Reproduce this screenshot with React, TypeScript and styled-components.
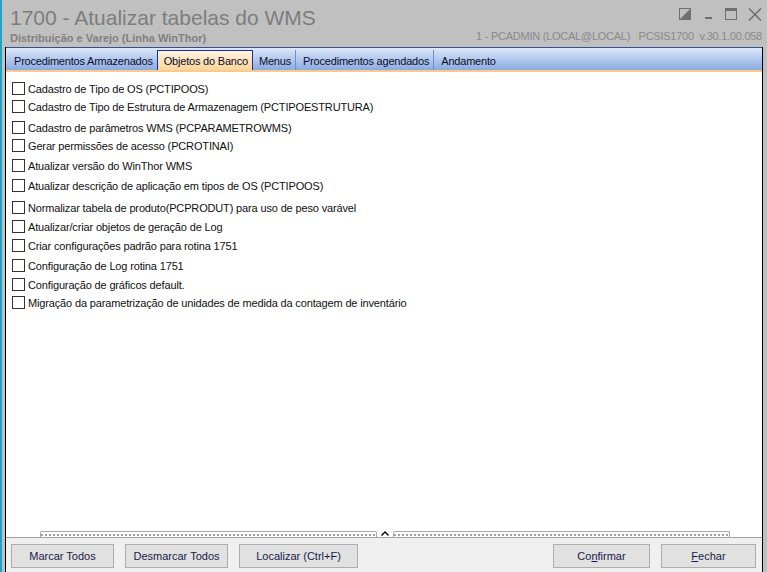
import React from "react";
import styled, { createGlobalStyle } from "styled-components";

const GlobalStyle = createGlobalStyle`
  html, body {
    margin: 0;
    padding: 0;
    background: #c0c0c0;
  }
  body {
    font-family: "Liberation Sans", Arial, sans-serif;
  }
`;

const Window = styled.div`
  width: 767px;
  height: 572px;
  box-sizing: border-box;
  border-left: 2px solid #27a1c0;
  background: #c0c0c0;
  display: flex;
  flex-direction: column;
  overflow: hidden;
`;

const TitleBar = styled.div`
  height: 47px;
  flex: none;
  display: flex;
  justify-content: space-between;
  padding: 0 5px 0 8px;
`;

const TitleBlock = styled.div`
  display: flex;
  flex-direction: column;
`;

const Title = styled.div`
  font-size: 21px;
  color: #7d7d7d;
  line-height: 24px;
  margin-top: 6px;
`;

const Subtitle = styled.div`
  font-size: 11px;
  font-weight: bold;
  color: #808080;
  margin-top: 2px;
`;

const RightBlock = styled.div`
  display: flex;
  flex-direction: column;
  align-items: flex-end;
`;

const Controls = styled.div`
  display: flex;
  gap: 10px;
  margin-top: 7px;
  height: 14px;
  align-items: center;
`;

const Info = styled.div`
  font-size: 11px;
  letter-spacing: -0.25px;
  color: #8a8a8a;
  margin-top: 9px;
  white-space: pre;
`;

const Frame = styled.div`
  flex: 1;
  display: flex;
  flex-direction: column;
  margin: 0 4px 0 3px;
  border-left: 1px solid #000;
  border-right: 1px solid #000;
  min-height: 0;
`;

const TabBar = styled.div`
  height: 22px;
  flex: none;
  display: flex;
  align-items: flex-end;
  padding-left: 2px;
  background: linear-gradient(#dde8fa, #8aabe1);
  border-top: 1px solid #3a4f8a;
  border-bottom: 2px solid #fbc98c;
`;

const Tab = styled.div<{ $active?: boolean; $sep?: boolean }>`
  height: 20px;
  box-sizing: border-box;
  padding: 0 4px 0 6px;
  font-size: 11px;
  letter-spacing: -0.2px;
  line-height: 22px;
  color: #0b0b2a;
  white-space: nowrap;
  ${(p) =>
    p.$active
      ? `
    background: linear-gradient(#fff4de, #fbd49a);
    border: 1px solid #1b2f8c;
    border-bottom: none;
    line-height: 20px;
  `
      : ""}
  ${(p) =>
    p.$sep
      ? `
    border-right: 1px solid #6d8fcf;
    margin-right: 1px;
  `
      : ""}
`;

const Body = styled.div`
  flex: 1;
  background: #fff;
  display: flex;
  flex-direction: column;
  padding-left: 6px;
`;

const Row = styled.label<{ $top: number }>`
  display: flex;
  align-items: center;
  height: 13px;
  margin-top: ${(p) => p.$top}px;
  font-size: 11px;
  letter-spacing: -0.15px;
  color: #101010;
  white-space: nowrap;
`;

const Box = styled.span`
  width: 13px;
  height: 13px;
  box-sizing: border-box;
  border: 1px solid #333;
  background: #fff;
  margin-right: 3px;
  flex: none;
`;

const Splitter = styled.div`
  height: 9px;
  flex: none;
  background: #fff;
  display: flex;
  align-items: flex-end;
  padding: 0 32px 0 34px;
  border-bottom: 1px solid #a0a0a0;
`;

const Grip = styled.div`
  flex: 1;
  height: 6px;
  box-sizing: border-box;
  border: 1px solid #a8a8a8;
  border-bottom: none;
  border-radius: 2px 2px 0 0;
  background: repeating-linear-gradient(
      90deg,
      #a0a0a0 0 2px,
      transparent 2px 4px
    )
    center 2px / 100% 2px no-repeat;
`;

const Caret = styled.div`
  width: 16px;
  display: flex;
  justify-content: center;
  align-items: center;
  height: 7px;
`;

const ButtonBar = styled.div`
  height: 34px;
  flex: none;
  box-sizing: border-box;
  background: #f0f0f0;
  display: flex;
  align-items: flex-start;
  padding: 6px 6px 0 5px;
  gap: 11px;
`;

const Button = styled.button<{ $w: number }>`
  width: ${(p) => p.$w}px;
  height: 24px;
  background: #e1e1e1;
  border: 1px solid #adadad;
  font-family: "Liberation Sans", Arial, sans-serif;
  font-size: 11px;
  color: #1a1a48;
  padding: 0;
`;

const Spacer = styled.div`
  flex: 1;
`;

const Key = styled.span`
  text-decoration: underline;
`;

const items: [string, number][] = [
  ["Cadastro de Tipo de OS (PCTIPOOS)", 10],
  ["Cadastro de Tipo de Estrutura de Armazenagem (PCTIPOESTRUTURA)", 5],
  ["Cadastro de parâmetros WMS (PCPARAMETROWMS)", 8],
  ["Gerar permissões de acesso (PCROTINAI)", 5],
  ["Atualizar versão do WinThor WMS", 7],
  ["Atualizar descrição de aplicação em tipos de OS (PCTIPOOS)", 7],
  ["Normalizar tabela de produto(PCPRODUT) para uso de peso varável", 9],
  ["Atualizar/criar objetos de geração de Log", 6],
  ["Criar configurações padrão para rotina 1751", 6],
  ["Configuração de Log rotina 1751", 7],
  ["Configuração de gráficos default.", 6],
  ["Migração da parametrização de unidades de medida da contagem de inventário", 5],
];

const tabs = [
  { label: "Procedimentos Armazenados" },
  { label: "Objetos do Banco", active: true },
  { label: "Menus", sep: true },
  { label: "Procedimentos agendados", sep: true },
  { label: "Andamento" },
];

export default function App() {
  return (
    <>
      <GlobalStyle />
      <Window>
        <TitleBar>
          <TitleBlock>
            <Title>1700 - Atualizar tabelas do WMS</Title>
            <Subtitle>Distribuição e Varejo (Linha WinThor)</Subtitle>
          </TitleBlock>
          <RightBlock>
            <Controls>
              <svg width="13" height="13" viewBox="0 0 13 13">
                <rect x="0.5" y="0.5" width="11" height="11" fill="none" stroke="#707070" />
                <path d="M12 0 L12 12 L0 12 Z" fill="#707070" />
              </svg>
              <svg width="13" height="13" viewBox="0 0 13 13">
                <rect x="3" y="9" width="7" height="2" fill="#707070" />
              </svg>
              <svg width="13" height="13" viewBox="0 0 13 13">
                <rect x="0.5" y="0.5" width="11" height="11" fill="none" stroke="#707070" />
                <rect x="0" y="0" width="12" height="3" fill="#707070" />
              </svg>
              <svg width="14" height="13" viewBox="0 0 14 13">
                <path d="M1 0.5 L13 12.5 M13 0.5 L1 12.5" stroke="#707070" strokeWidth="1.6" />
              </svg>
            </Controls>
            <Info>1 - PCADMIN (LOCAL@LOCAL)   PCSIS1700  v.30.1.00.058</Info>
          </RightBlock>
        </TitleBar>
        <Frame>
          <TabBar>
            {tabs.map((t) => (
              <Tab key={t.label} $active={t.active} $sep={t.sep}>
                {t.label}
              </Tab>
            ))}
          </TabBar>
          <Body>
            {items.map(([text, top]) => (
              <Row key={text} $top={top}>
                <Box />
                {text}
              </Row>
            ))}
          </Body>
          <Splitter>
            <Grip />
            <Caret>
              <svg width="8" height="5" viewBox="0 0 8 5">
                <path d="M0.5 4.5 L4 1 L7.5 4.5" fill="none" stroke="#000" strokeWidth="1.4" />
              </svg>
            </Caret>
            <Grip />
          </Splitter>
          <ButtonBar>
            <Button $w={103}>Marcar Todos</Button>
            <Button $w={103}>Desmarcar Todos</Button>
            <Button $w={119}>Localizar (Ctrl+F)</Button>
            <Spacer />
            <Button $w={97}>
              Co<Key>n</Key>firmar
            </Button>
            <Button $w={95}>
              <Key>F</Key>echar
            </Button>
          </ButtonBar>
        </Frame>
      </Window>
    </>
  );
}
